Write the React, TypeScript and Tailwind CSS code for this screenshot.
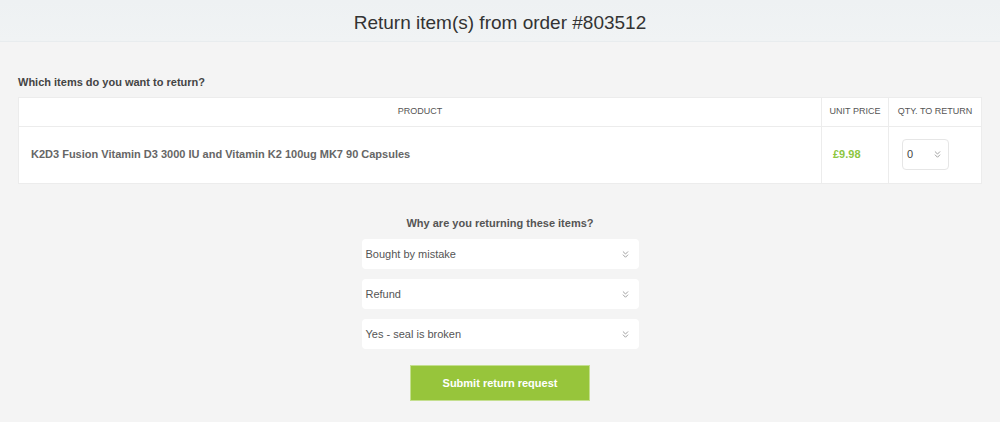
import { ChevronsDown } from 'lucide-react';

const reasons = ['Bought by mistake', 'Refund', 'Yes - seal is broken'];

const Select = ({ value }: { value: string }) => (
  <div className="flex h-[30px] w-[277px] items-center justify-between rounded-[4px] bg-white pl-[4px] pr-[8px] text-[11px] text-[#555]">
    <span>{value}</span>
    <ChevronsDown className="h-[11px] w-[11px] text-[#999]" strokeWidth={2} />
  </div>
);

export default function App() {
  return (
    <div className="min-h-[422px] bg-[#f4f4f4] font-['Liberation_Sans',Arial,sans-serif] text-[#333]">
      <header className="flex h-[42px] items-center justify-center border-b border-[#e8ecee] bg-gradient-to-b from-[#eef1f3] to-[#f0f3f4]">
        <h1 className="mt-[5px] text-[19px] text-[#333]">Return item(s) from order #803512</h1>
      </header>

      <div className="px-[18px] pt-[32px]">
        <h2 className="text-[11px] font-bold text-[#444]">Which items do you want to return?</h2>
        <table className="mt-[6px] w-[964px] border-collapse bg-white">
          <thead>
            <tr className="h-[29px] text-[9px] text-[#555]">
              <th className="border border-[#ececec] font-normal">PRODUCT</th>
              <th className="w-[67px] border border-[#ececec] font-normal">UNIT PRICE</th>
              <th className="w-[93px] border border-[#ececec] font-normal">QTY. TO RETURN</th>
            </tr>
          </thead>
          <tbody>
            <tr className="h-[57px]">
              <td className="border border-[#ececec] pl-[12px] text-[11px] font-bold text-[#666]">
                K2D3 Fusion Vitamin D3 3000 IU and Vitamin K2 100ug MK7 90 Capsules
              </td>
              <td className="border border-[#ececec] pl-[11px] text-[11px] font-bold text-[#8dc63f]">£9.98</td>
              <td className="border border-[#ececec] pl-[13px]">
                <div className="flex h-[31px] w-[47px] items-center justify-between rounded-[4px] border border-[#e6e6e6] pl-[4px] pr-[5px] text-[11px] text-[#444]">
                  <span>0</span>
                  <ChevronsDown className="h-[11px] w-[11px] text-[#999]" strokeWidth={2} />
                </div>
              </td>
            </tr>
          </tbody>
        </table>
      </div>

      <div className="mt-[31px] flex flex-col items-center">
        <h3 className="text-[11px] font-bold text-[#555]">Why are you returning these items?</h3>
        <div className="mt-[8px] flex flex-col gap-[10px]">
          {reasons.map((r) => (
            <Select key={r} value={r} />
          ))}
        </div>
        <button className="mt-[16px] h-[36px] w-[180px] border border-[#c4df8f] bg-[#97c53b] text-[11px] font-bold text-white">
          Submit return request
        </button>
      </div>
    </div>
  );
}
